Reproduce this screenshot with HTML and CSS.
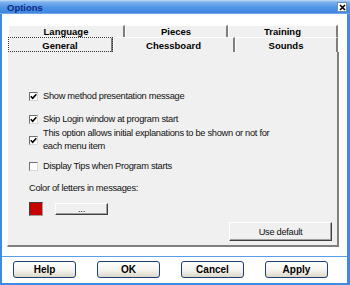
FILE: index.html
```html
<!DOCTYPE html>
<html lang="en">
<head>
    <meta charset="UTF-8">
    <meta name="viewport" content="width=device-width, initial-scale=1.0">
    <title>Options</title>
    <link rel="stylesheet" href="styles.css">
</head>
<body>
    <div class="window">
        <div class="titlebar">
            <span class="title">Options</span>
            <span class="close">
                <svg width="7" height="7" viewBox="0 0 7 7"><path d="M1 1 L6 6 M6 1 L1 6" stroke="#000" stroke-width="1.6"/></svg>
            </span>
        </div>

        <div class="client">
            <div class="sheet">
                <div class="tabs">
                    <div class="tab-row row-back">
                        <div class="tab">Language</div>
                        <div class="tab">Pieces</div>
                        <div class="tab">Training</div>
                    </div>
                    <div class="tab-row row-front">
                        <div class="tab active">General</div>
                        <div class="tab">Chessboard</div>
                        <div class="tab">Sounds</div>
                    </div>
                </div>

                <div class="panel">
                    <div class="check-list">
                        <label class="check">
                            <span class="box"><svg width="7" height="7" viewBox="0 0 7 7"><path d="M0.8 3.2 L2.7 5.2 L6.3 1.2" fill="none" stroke="#000" stroke-width="1.6"/></svg></span>
                            <span class="text">Show method presentation message</span>
                        </label>
                        <label class="check row-2">
                            <span class="box"><svg width="7" height="7" viewBox="0 0 7 7"><path d="M0.8 3.2 L2.7 5.2 L6.3 1.2" fill="none" stroke="#000" stroke-width="1.6"/></svg></span>
                            <span class="text">Skip Login window at program start</span>
                        </label>
                        <label class="check row-3">
                            <span class="box"><svg width="7" height="7" viewBox="0 0 7 7"><path d="M0.8 3.2 L2.7 5.2 L6.3 1.2" fill="none" stroke="#000" stroke-width="1.6"/></svg></span>
                            <span class="text">This option allows initial explanations to be shown or not for<br>each menu item</span>
                        </label>
                        <label class="check row-4">
                            <span class="box"></span>
                            <span class="text">Display Tips when Program starts</span>
                        </label>
                    </div>

                    <p class="color-label">Color of letters in messages:</p>
                    <div class="color-row">
                        <span class="swatch"></span>
                        <button class="btn3d btn-dots">...</button>
                    </div>

                    <button class="btn3d btn-default">Use default</button>
                </div>
            </div>

            <div class="separator"></div>

            <div class="actions">
                <button class="xp-btn">Help</button>
                <button class="xp-btn">OK</button>
                <button class="xp-btn">Cancel</button>
                <button class="xp-btn">Apply</button>
            </div>
        </div>
    </div>
</body>
</html>
```

FILE: styles.css
```css
* {
    margin: 0;
    padding: 0;
    box-sizing: border-box;
}

body {
    width: 350px;
    height: 285px;
    overflow: hidden;
    background: #fff;
    font-family: "Liberation Sans", Arial, sans-serif;
    color: #000;
}

.window {
    width: 350px;
    height: 285px;
    display: flex;
    flex-direction: column;
}

/* Barra de titulo */
.titlebar {
    height: 14px;
    display: flex;
    align-items: center;
    justify-content: space-between;
    padding: 0 3px 0 7px;
    background: linear-gradient(#c6def8 0, #7eb2ec 2px, #5296e6 7px, #3f86e0 13px, #9cc6f2 14px);
}

.title {
    font-size: 9.5px;
    font-weight: bold;
    color: #0c2a86;
}

.close {
    width: 10px;
    height: 10px;
    background: #fff;
    border: 1px solid #6d8fb8;
    display: flex;
    align-items: center;
    justify-content: center;
}

.client {
    flex: 1;
    display: flex;
    flex-direction: column;
    border-left: 2px solid #3d8be4;
    border-right: 3px solid #3d8be4;
    border-bottom: 2px solid #3d8be4;
}

.sheet {
    margin: 11px 8px 0 5px;
}

/* Abas */
.tabs {
    margin: 0 1px;
}

.tab-row {
    display: grid;
}

.row-back {
    grid-template-columns: 117px 103px 1fr;
    height: 12px;
}

.row-front {
    grid-template-columns: 105px 122px 1fr;
    height: 15px;
}

.tab {
    display: flex;
    align-items: center;
    justify-content: center;
    background: #f0f0f0;
    border-top: 1px solid #fff;
    border-left: 1px solid #fff;
    border-right: 2px solid #7f7f7f;
    font-size: 9.5px;
    font-weight: bold;
}

.tab.active {
    outline: 1px dotted #333;
    outline-offset: -1px;
}

/* Painel */
.panel {
    height: 195px;
    display: flex;
    flex-direction: column;
    background: #f0f0f0;
    border-left: 1px solid #fff;
    border-right: 2px solid #808080;
    border-bottom: 2px solid #808080;
    padding: 0 5px 4px 21px;
    font-size: 9.3px;
    letter-spacing: -0.3px;
    line-height: 13px;
    color: #111;
}

.check-list {
    padding-top: 38px;
    display: flex;
    flex-direction: column;
}

.check {
    display: flex;
    align-items: center;
    gap: 5px;
}

.row-2 {
    margin-top: 10px;
}

.row-3 {
    margin-top: 1px;
}

.row-4 {
    margin-top: 7px;
}

.box {
    width: 9px;
    height: 9px;
    flex: none;
    display: flex;
    align-items: center;
    justify-content: center;
    background: #fff;
    border: 1px solid;
    border-color: #6f6f6f #d8d8d8 #d8d8d8 #6f6f6f;
}

.color-label {
    margin-top: 9px;
}

.color-row {
    margin-top: 7px;
    display: flex;
    align-items: center;
    height: 14px;
}

.swatch {
    width: 14px;
    height: 14px;
    background: #c40000;
    border: 1px solid;
    border-color: #404040 #a0a0a0 #a0a0a0 #404040;
}

.btn3d {
    background: #f0f0f0;
    border: 1px solid;
    border-color: #fff #404040 #404040 #fff;
    box-shadow: inset -1px -1px 0 #a0a0a0;
    font-family: inherit;
    font-size: inherit;
    letter-spacing: inherit;
    color: #111;
}

.btn-dots {
    margin-left: 12px;
    width: 53px;
    height: 12px;
    line-height: 8px;
}

.btn-default {
    margin-top: auto;
    align-self: flex-end;
    width: 103px;
    height: 19px;
}

/* Botoes de baixo */
.separator {
    margin-top: 9px;
    height: 1px;
    background: #5a9ee8;
}

.actions {
    margin-top: 4px;
    display: flex;
    gap: 21px;
    padding-left: 11px;
}

.xp-btn {
    width: 63px;
    height: 17px;
    border: 1px solid #1e3f7a;
    border-radius: 3px;
    background: linear-gradient(#ffffff, #f4f3ee 55%, #dcd8c8);
    font-family: "Liberation Sans", Arial, sans-serif;
    font-size: 10px;
    font-weight: bold;
    color: #000;
}
```
